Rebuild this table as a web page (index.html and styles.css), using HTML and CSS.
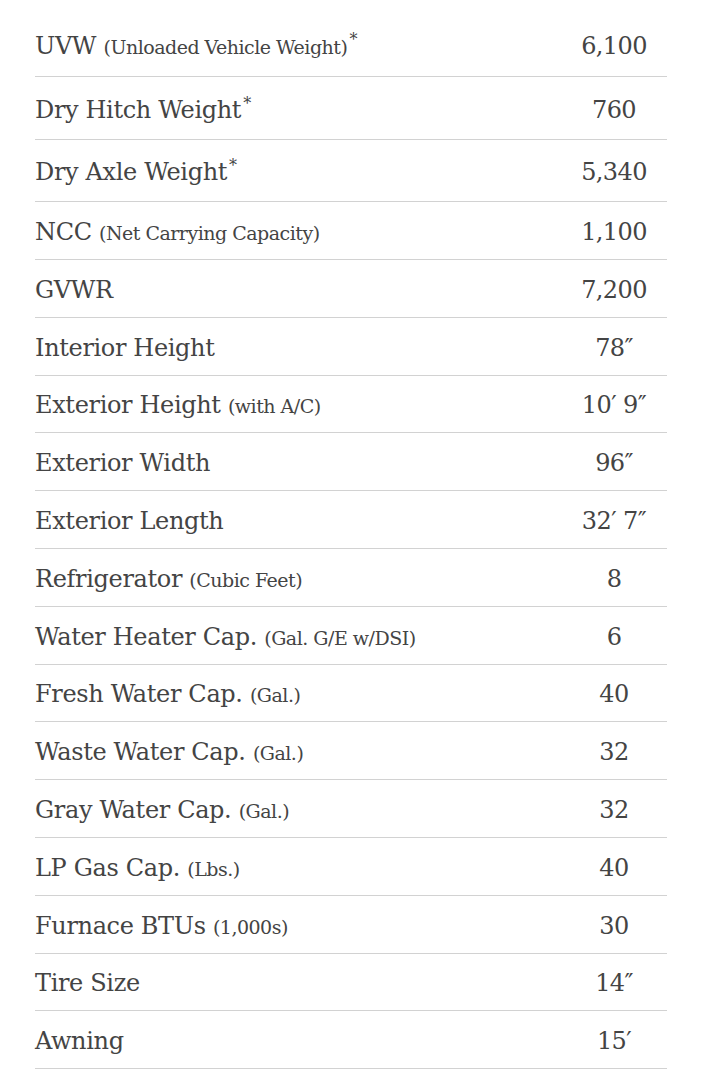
FILE: index.html
```html
<!DOCTYPE html>
<html lang="en">
<head>
<meta charset="utf-8">
<title>Specifications</title>
<link rel="stylesheet" href="styles.css">
</head>
<body>
<div class="specs">
  <div class="row tall first"><div class="label">UVW <span class="note">(Unloaded Vehicle Weight)</span><sup>*</sup></div><div class="value">6,100</div></div>
  <div class="row tall"><div class="label">Dry Hitch Weight<sup>*</sup></div><div class="value">760</div></div>
  <div class="row tall"><div class="label">Dry Axle Weight<sup>*</sup></div><div class="value">5,340</div></div>
  <div class="row"><div class="label">NCC <span class="note">(Net Carrying Capacity)</span></div><div class="value">1,100</div></div>
  <div class="row"><div class="label">GVWR</div><div class="value">7,200</div></div>
  <div class="row"><div class="label">Interior Height</div><div class="value">78″</div></div>
  <div class="row"><div class="label">Exterior Height <span class="note">(with A/C)</span></div><div class="value">10′ 9″</div></div>
  <div class="row"><div class="label">Exterior Width</div><div class="value">96″</div></div>
  <div class="row"><div class="label">Exterior Length</div><div class="value">32′ 7″</div></div>
  <div class="row"><div class="label">Refrigerator <span class="note">(Cubic Feet)</span></div><div class="value">8</div></div>
  <div class="row"><div class="label">Water Heater Cap. <span class="note">(Gal. G/E w/DSI)</span></div><div class="value">6</div></div>
  <div class="row"><div class="label">Fresh Water Cap. <span class="note">(Gal.)</span></div><div class="value">40</div></div>
  <div class="row"><div class="label">Waste Water Cap. <span class="note">(Gal.)</span></div><div class="value">32</div></div>
  <div class="row"><div class="label">Gray Water Cap. <span class="note">(Gal.)</span></div><div class="value">32</div></div>
  <div class="row"><div class="label">LP Gas Cap. <span class="note">(Lbs.)</span></div><div class="value">40</div></div>
  <div class="row"><div class="label">Furnace BTUs <span class="note">(1,000s)</span></div><div class="value">30</div></div>
  <div class="row"><div class="label">Tire Size</div><div class="value">14″</div></div>
  <div class="row"><div class="label">Awning</div><div class="value">15′</div></div>
</div>
</body>
</html>
```
FILE: styles.css
```css
html, body {
  margin: 0;
  padding: 0;
  background: #ffffff;
}

body {
  font-family: "DejaVu Serif", "Liberation Serif", serif;
  color: #444444;
}

.specs {
  margin: 15px 0 0 35px;
  width: 632px;
  display: flex;
  flex-direction: column;
}

.row {
  box-sizing: border-box;
  height: 57.8px;
  display: flex;
  align-items: center;
  border-bottom: 1.5px solid #d2d2d2;
  padding-top: 3px;
}

.row.tall {
  height: 62.4px;
}

.row.first {
  padding-top: 0;
}

.label {
  flex: 1;
  font-size: 24px;
  letter-spacing: -0.35px;
  white-space: nowrap;
}

.note {
  font-size: 19px;
  letter-spacing: -0.5px;
}

.label sup {
  font-size: 16px;
  line-height: 0;
  vertical-align: 0.55em;
  margin-left: 2px;
}

.value {
  width: 106px;
  text-align: center;
  font-size: 24px;
  letter-spacing: -0.6px;
}
```
